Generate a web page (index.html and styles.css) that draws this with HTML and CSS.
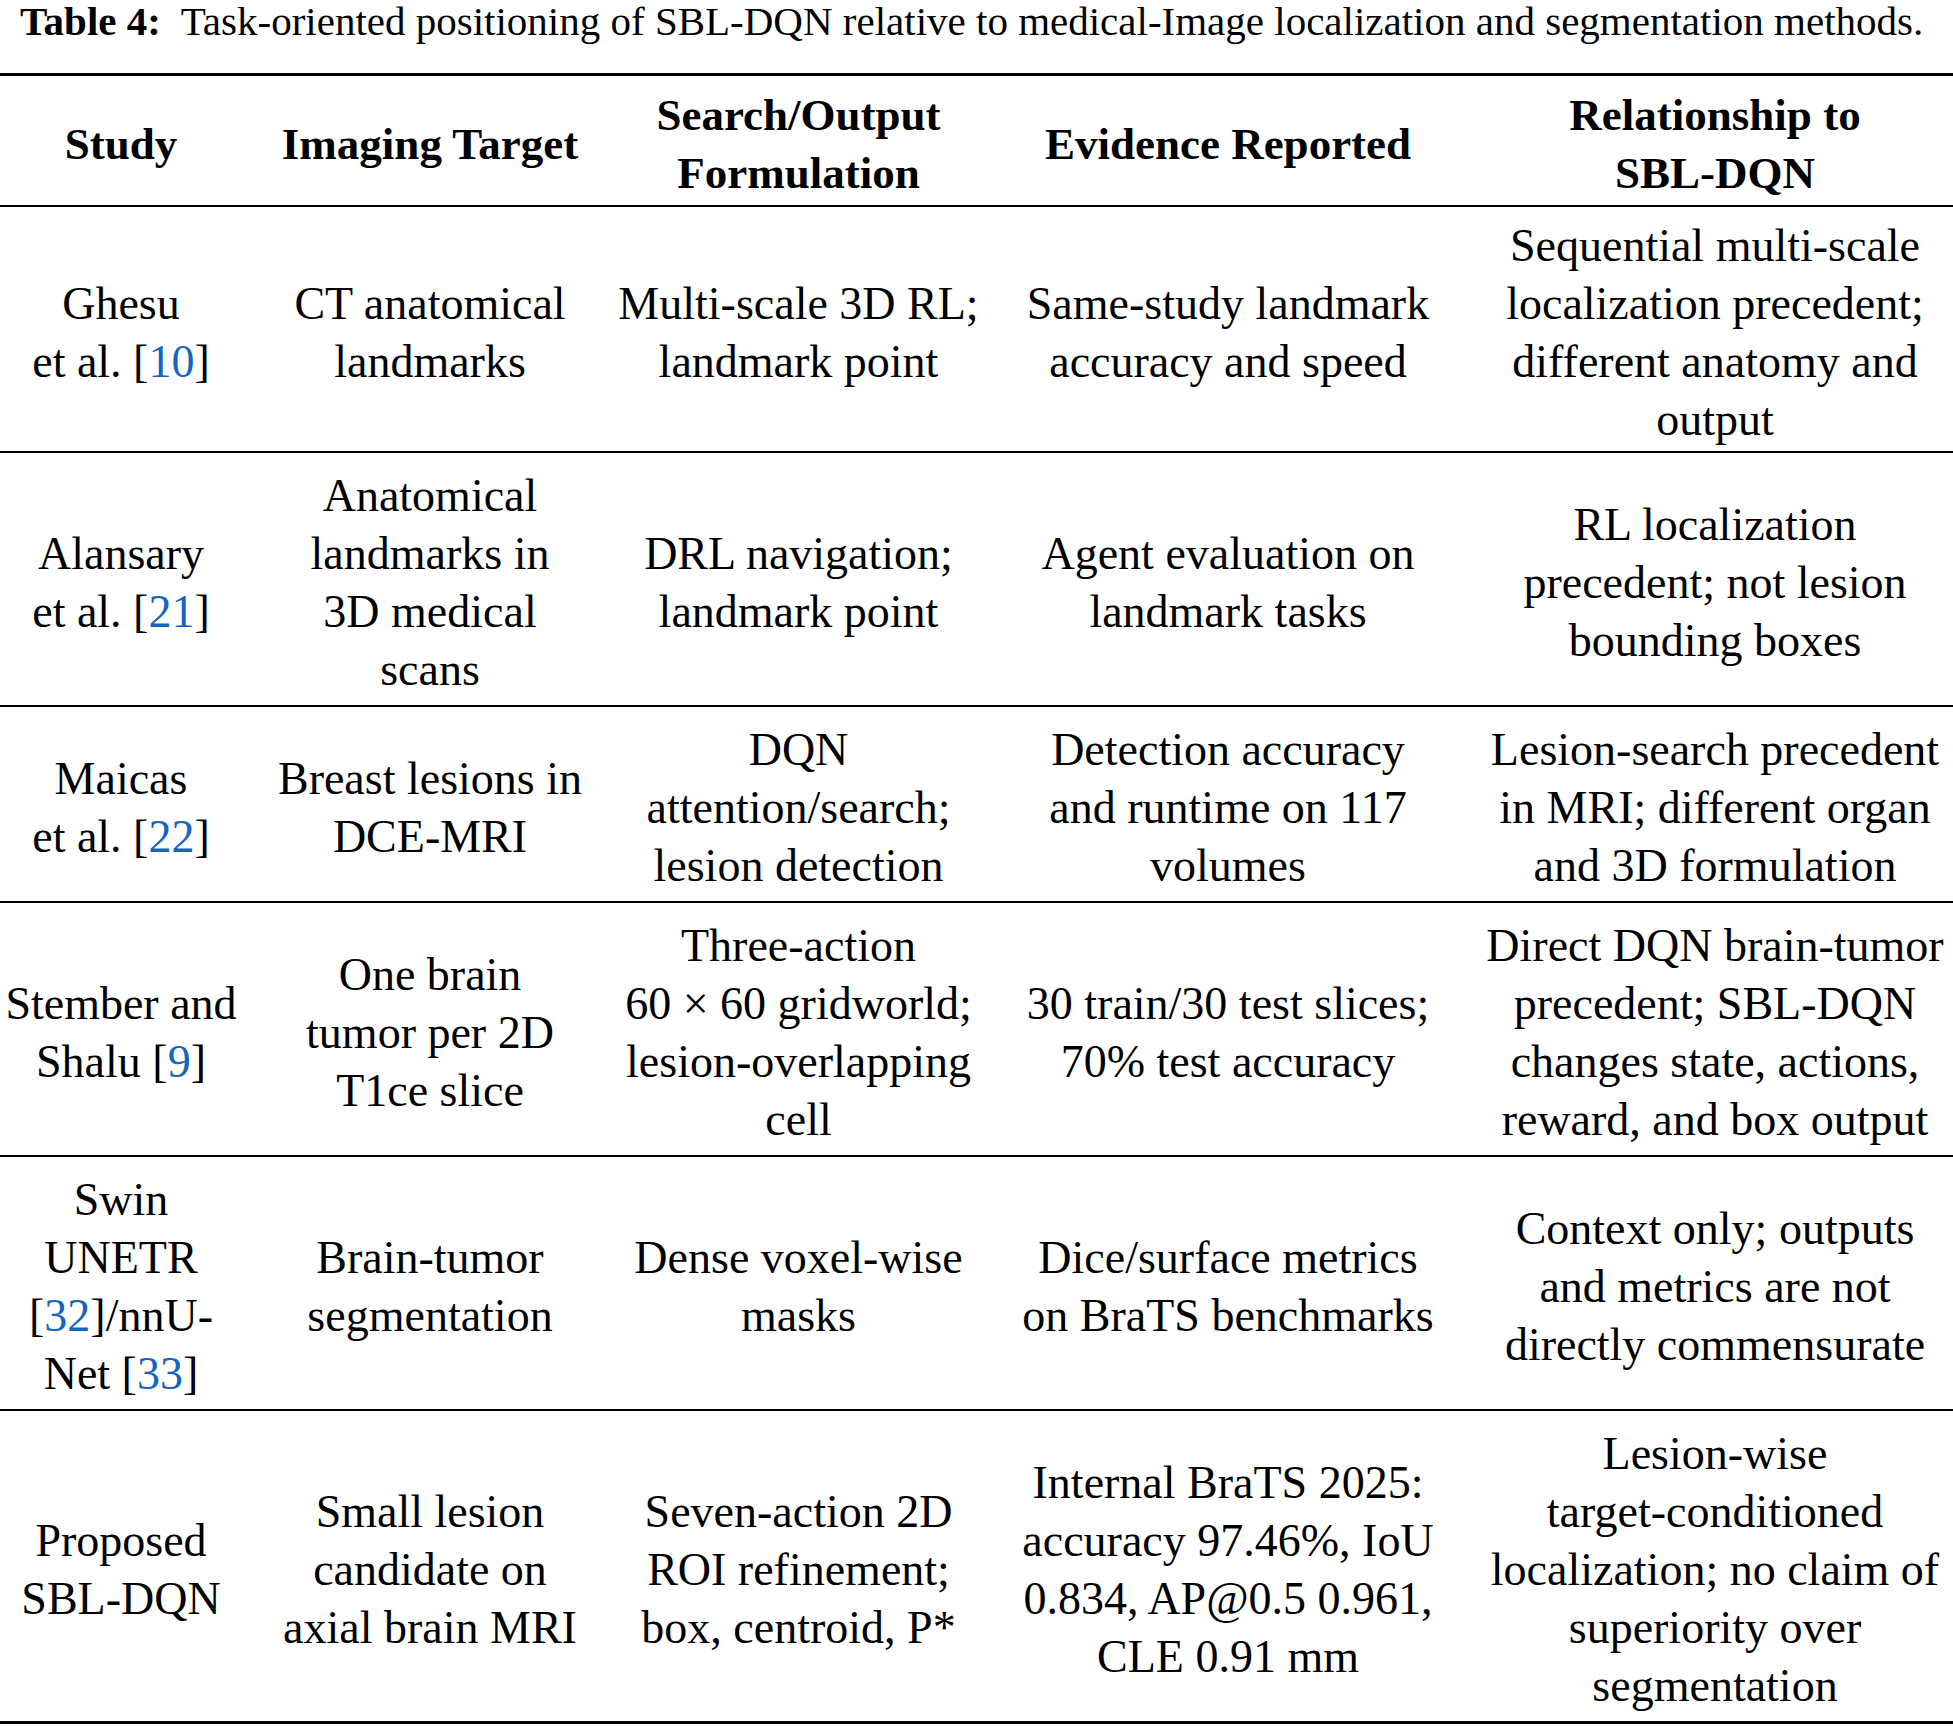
FILE: index.html
```html
<!DOCTYPE html>
<html>
<head>
<meta charset="utf-8">
<link rel="stylesheet" href="styles.css">
</head>
<body>
<div class="page">
  <p class="caption"><b>Table 4:</b>&nbsp; Task-oriented positioning of SBL-DQN relative to medical-Image localization and segmentation methods.</p>
  <table class="tbl">
    <colgroup>
      <col class="c1"><col class="c2"><col class="c3"><col class="c4"><col class="c5">
    </colgroup>
    <thead>
      <tr>
        <th>Study</th>
        <th>Imaging Target</th>
        <th>Search/Output<br>Formulation</th>
        <th>Evidence Reported</th>
        <th>Relationship to<br>SBL-DQN</th>
      </tr>
    </thead>
    <tbody>
      <tr class="first">
        <td>Ghesu<br>et al. [<span class="ref">10</span>]</td>
        <td>CT anatomical<br>landmarks</td>
        <td>Multi-scale 3D RL;<br>landmark point</td>
        <td>Same-study landmark<br>accuracy and speed</td>
        <td>Sequential multi-scale<br>localization precedent;<br>different anatomy and<br>output</td>
      </tr>
      <tr>
        <td>Alansary<br>et al. [<span class="ref">21</span>]</td>
        <td>Anatomical<br>landmarks in<br>3D medical<br>scans</td>
        <td>DRL navigation;<br>landmark point</td>
        <td>Agent evaluation on<br>landmark tasks</td>
        <td>RL localization<br>precedent; not lesion<br>bounding boxes</td>
      </tr>
      <tr>
        <td>Maicas<br>et al. [<span class="ref">22</span>]</td>
        <td>Breast lesions in<br>DCE-MRI</td>
        <td>DQN<br>attention/search;<br>lesion detection</td>
        <td>Detection accuracy<br>and runtime on 117<br>volumes</td>
        <td>Lesion-search precedent<br>in MRI; different organ<br>and 3D formulation</td>
      </tr>
      <tr>
        <td>Stember and<br>Shalu [<span class="ref">9</span>]</td>
        <td>One brain<br>tumor per 2D<br>T1ce slice</td>
        <td>Three-action<br>60 × 60 gridworld;<br>lesion-overlapping<br>cell</td>
        <td>30 train/30 test slices;<br>70% test accuracy</td>
        <td>Direct DQN brain-tumor<br>precedent; SBL-DQN<br>changes state, actions,<br>reward, and box output</td>
      </tr>
      <tr>
        <td>Swin<br>UNETR<br>[<span class="ref">32</span>]/nnU-<br>Net [<span class="ref">33</span>]</td>
        <td>Brain-tumor<br>segmentation</td>
        <td>Dense voxel-wise<br>masks</td>
        <td>Dice/surface metrics<br>on BraTS benchmarks</td>
        <td>Context only; outputs<br>and metrics are not<br>directly commensurate</td>
      </tr>
      <tr>
        <td>Proposed<br>SBL-DQN</td>
        <td>Small lesion<br>candidate on<br>axial brain MRI</td>
        <td>Seven-action 2D<br>ROI refinement;<br>box, centroid, P*</td>
        <td>Internal BraTS 2025:<br>accuracy 97.46%, IoU<br>0.834, AP@0.5 0.961,<br>CLE 0.91 mm</td>
        <td>Lesion-wise<br>target-conditioned<br>localization; no claim of<br>superiority over<br>segmentation</td>
      </tr>
    </tbody>
  </table>
</div>
</body>
</html>
```

FILE: styles.css
```css
html, body {
  margin: 0;
  padding: 0;
  background: #ffffff;
}
body {
  font-family: "Liberation Serif", "Times New Roman", serif;
  color: #000000;
}
.page {
  width: 1953px;
}
.caption {
  margin: 0;
  padding: 0 0 0 20px;
  height: 73px;
  font-size: 41px;
  line-height: 42px;
  white-space: nowrap;
}
.tbl {
  width: 1953px;
  border-collapse: collapse;
  table-layout: fixed;
  border-top: 3px solid #000;
  border-bottom: 3px solid #000;
}
.c1 { width: 242px; }
.c2 { width: 376px; }
.c3 { width: 361px; }
.c4 { width: 498px; }
.c5 { width: 476px; }
.tbl th, .tbl td {
  text-align: center;
  vertical-align: middle;
  white-space: nowrap;
  font-size: 46px;
  line-height: 58px;
  padding: 14px 0 6px;
}
.tbl th {
  font-weight: bold;
  font-size: 45px;
  padding: 10px 0 3px;
  border-bottom: 2px solid #000;
}
.tbl tbody tr {
  border-bottom: 2px solid #000;
}
.tbl tbody tr:last-child {
  border-bottom: none;
}
.tbl tr.first td {
  padding: 10px 0 2px;
}
.ref {
  color: #1565c0;
}
```
